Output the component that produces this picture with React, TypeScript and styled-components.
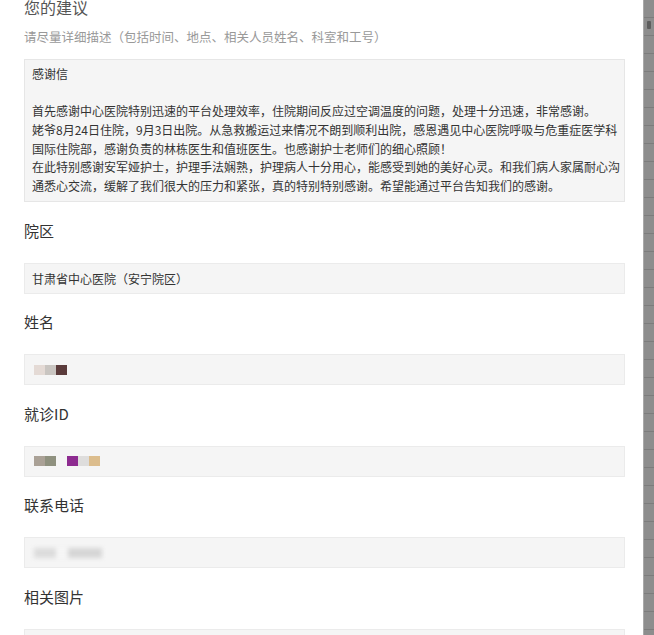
import React from "react";
import styled, { createGlobalStyle } from "styled-components";

const GlobalStyle = createGlobalStyle`
  html, body {
    margin: 0;
    padding: 0;
    background: #ffffff;
  }
  body {
    font-family: "Noto Sans CJK SC", "Microsoft YaHei", sans-serif;
    color: #333;
  }
`;

const Page = styled.div`
  display: flex;
  width: 654px;
  height: 635px;
  overflow: hidden;
`;

const Panel = styled.div`
  width: 643px;
  height: 635px;
  background: #ffffff;
  overflow: hidden;
  flex-shrink: 0;
`;

const Backdrop = styled.div`
  flex: 1;
  height: 635px;
  border-left: 1px solid #a9a9a9;
  background-color: #8d8d8d;
  background-image: repeating-linear-gradient(
    to bottom,
    transparent 0,
    transparent 17px,
    #7c7c7c 17px,
    #7c7c7c 18px
  );
  padding-top: 21px;
  box-sizing: border-box;
`;

const Marker = styled.div`
  width: 4px;
  height: 8px;
  margin-left: 3px;
  background: #5e5e5e;
  border-radius: 1px;
`;

const Form = styled.div`
  padding: 0 18px 0 24px;
`;

const Title = styled.div`
  margin-top: -3px;
  font-size: 16px;
  line-height: 20px;
  color: #555;
`;

const Hint = styled.div`
  margin-top: 10px;
  font-size: 12.5px;
  line-height: 20px;
  color: #999;
`;

const TextBox = styled.div`
  margin-top: 12px;
  height: 143px;
  box-sizing: border-box;
  padding: 5px 7px;
  background: #f5f5f5;
  border: 1px solid #e6e6e6;
  font-size: 12px;
  line-height: 18.7px;
  color: #333;
  white-space: nowrap;
  overflow: hidden;
`;

const Line = styled.div`
  height: 18.7px;
`;

const Label = styled.div`
  margin-top: 18.5px;
  font-size: 15px;
  line-height: 20px;
  color: #333;
`;

const Field = styled.div`
  margin-top: 22px;
  height: 31px;
  box-sizing: border-box;
  padding: 0 7px;
  display: flex;
  align-items: center;
  background: #f5f5f5;
  border: 1px solid #ebebeb;
  font-size: 12px;
  color: #333;
`;

const Mosaic = styled.div<{ $soft?: boolean }>`
  display: flex;
  align-items: center;
  margin-left: 2px;
  filter: blur(${({ $soft }) => ($soft ? "2px" : "0.6px")});
`;

const Cell = styled.span<{ $color: string; $width?: number }>`
  display: block;
  width: ${({ $width }) => $width ?? 11}px;
  height: 10px;
  background: ${({ $color }) => $color};
`;

const letter = [
  "感谢信",
  "",
  "首先感谢中心医院特别迅速的平台处理效率，住院期间反应过空调温度的问题，处理十分迅速，非常感谢。",
  "姥爷8月24日住院，9月3日出院。从急救搬运过来情况不朗到顺利出院，感恩遇见中心医院呼吸与危重症医学科",
  "国际住院部，感谢负责的林栋医生和值班医生。也感谢护士老师们的细心照顾！",
  "在此特别感谢安军娅护士，护理手法娴熟，护理病人十分用心，能感受到她的美好心灵。和我们病人家属耐心沟",
  "通悉心交流，缓解了我们很大的压力和紧张，真的特别特别感谢。希望能通过平台告知我们的感谢。",
];

const App = () => {
  return (
    <Page>
      <GlobalStyle />
      <Panel>
        <Form>
          <Title>您的建议</Title>
          <Hint>请尽量详细描述（包括时间、地点、相关人员姓名、科室和工号）</Hint>
          <TextBox>
            {letter.map((text, i) => (
              <Line key={i}>{text}</Line>
            ))}
          </TextBox>

          <Label>院区</Label>
          <Field>甘肃省中心医院（安宁院区）</Field>

          <Label>姓名</Label>
          <Field>
            <Mosaic>
              <Cell $color="#e4dad5" />
              <Cell $color="#c9c5c1" />
              <Cell $color="#5b3b3b" />
            </Mosaic>
          </Field>

          <Label>就诊ID</Label>
          <Field>
            <Mosaic>
              <Cell $color="#aaa196" />
              <Cell $color="#8f917f" />
              <Cell $color="#f5f5f5" />
              <Cell $color="#8d2b90" />
              <Cell $color="#dedddc" />
              <Cell $color="#dcbd8d" />
            </Mosaic>
          </Field>

          <Label>联系电话</Label>
          <Field>
            <Mosaic $soft>
              <Cell $color="#dcdcdc" $width={22} />
              <Cell $color="#f5f5f5" $width={12} />
              <Cell $color="#d6d6d6" $width={34} />
            </Mosaic>
          </Field>

          <Label>相关图片</Label>
          <Field />
        </Form>
      </Panel>
      <Backdrop>
        <Marker />
      </Backdrop>
    </Page>
  );
};

export default App;
